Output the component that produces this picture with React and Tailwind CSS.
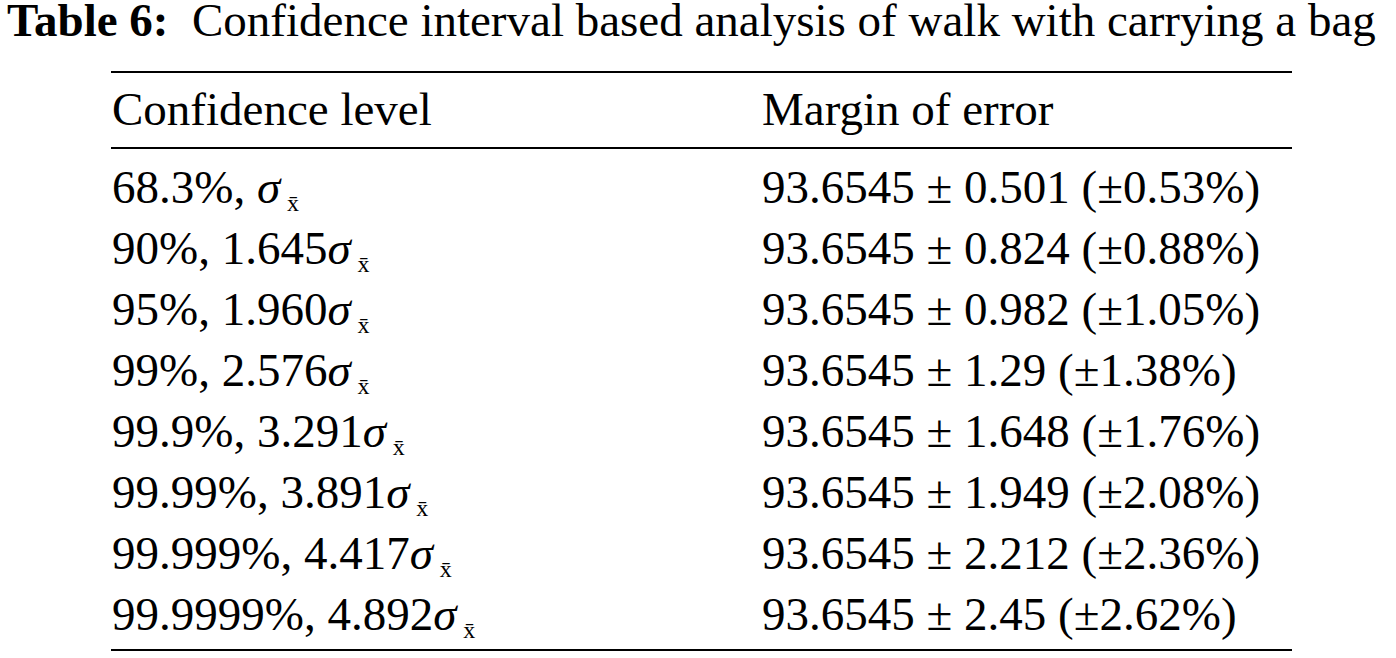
import React from "react";

const ROWS = [
  ["68.3%, ", "", "93.6545 ± 0.501 (±0.53%)"],
  ["90%, ", "1.645", "93.6545 ± 0.824 (±0.88%)"],
  ["95%, ", "1.960", "93.6545 ± 0.982 (±1.05%)"],
  ["99%, ", "2.576", "93.6545 ± 1.29 (±1.38%)"],
  ["99.9%, ", "3.291", "93.6545 ± 1.648 (±1.76%)"],
  ["99.99%, ", "3.891", "93.6545 ± 1.949 (±2.08%)"],
  ["99.999%, ", "4.417", "93.6545 ± 2.212 (±2.36%)"],
  ["99.9999%, ", "4.892", "93.6545 ± 2.45 (±2.62%)"],
];

const Sigma = () => (
  <>
    <span className="italic">σ</span>
    <span className="relative top-[8px] ml-[7px] text-[24px]">x̄</span>
  </>
);

const App = () => {
  return (
    <div className="w-[1396px] h-[658px] bg-white text-black font-['Liberation_Serif',serif]">
      <div className="pl-[7px] h-[41px] text-[47px] leading-[41px] whitespace-nowrap">
        <span className="font-bold">Table 6:</span>
        <span>{"\u00a0 Confidence interval based analysis of walk with carrying a bag"}</span>
      </div>

      <div className="mt-[30px] ml-[111px] w-[1181px] border-t-2 border-b-2 border-black text-[47px] leading-[61px]">
        {/* header */}
        <div className="grid grid-cols-[651px_1fr] h-[76px] pt-[6px] border-b-2 border-black">
          <div className="pl-[1px]">Confidence level</div>
          <div>Margin of error</div>
        </div>

        {/* body */}
        <div className="pt-[8px] pb-[4px]">
          {ROWS.map((row, index) => (
            <div key={index} className="grid grid-cols-[651px_1fr] h-[61px] whitespace-nowrap">
              <div className="pl-[1px]">
                {row[0]}
                {row[1]}
                <Sigma />
              </div>
              <div>{row[2]}</div>
            </div>
          ))}
        </div>
      </div>
    </div>
  );
};

export default App;
